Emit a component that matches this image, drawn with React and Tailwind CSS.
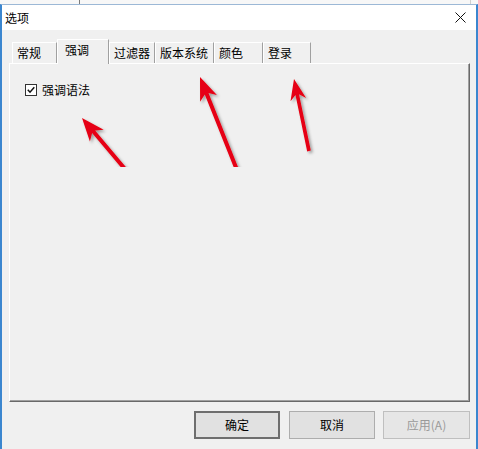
import React from 'react';

const FONT = "font-['Noto_Sans_CJK_SC','Microsoft_YaHei',sans-serif]";

// a red arrow drawn as a polygon, tip -> tail
const arrowPoints = (tx, ty, sx, sy, shaft = 2, headLen = 22, headHalf = 8) => {
  const dx = sx - tx;
  const dy = sy - ty;
  const len = Math.hypot(dx, dy);
  const ux = dx / len;
  const uy = dy / len;
  const px = -uy;
  const py = ux;
  const bx = tx + ux * headLen;
  const by = ty + uy * headLen;
  const nx = tx + ux * (headLen - 5);
  const ny = ty + uy * (headLen - 5);
  const pts = [
    [tx, ty],
    [bx + px * headHalf, by + py * headHalf],
    [nx + px * shaft, ny + py * shaft],
    [sx + px * shaft, sy + py * shaft],
    [sx - px * shaft, sy - py * shaft],
    [nx - px * shaft, ny - py * shaft],
    [bx - px * headHalf, by - py * headHalf],
  ];
  return pts.map(([x, y]) => `${x.toFixed(1)},${y.toFixed(1)}`).join(' ');
};

const Arrows = () => (
  <svg className="absolute inset-0 pointer-events-none" width="478" height="449" viewBox="0 0 478 449">
    <defs>
      <filter id="sh" x="-20%" y="-20%" width="140%" height="140%">
        <feDropShadow dx="2" dy="2" stdDeviation="1.5" floodColor="#000" floodOpacity="0.35" />
      </filter>
      <clipPath id="cut">
        <rect x="0" y="0" width="478" height="167" />
      </clipPath>
    </defs>
    <g clipPath="url(#cut)" filter="url(#sh)" fill="#e60012">
      <polygon points={arrowPoints(82, 118, 130, 175, 2, 23, 9)} />
      <polygon points={arrowPoints(200, 77, 239, 175, 2, 23, 9)} />
      <polygon points={arrowPoints(294, 79, 309, 151, 1.8, 21, 8)} />
    </g>
  </svg>
);

const Tab = ({ label, w, active }) =>
  active ? (
    <div
      className={`relative z-10 -mb-px h-[25px] ${w} bg-[#f0f0f0] border-l border-t border-white border-r border-r-[#a0a0a0] pl-[7px] pt-[2px] text-[12px] leading-[16px] text-black`}
    >
      {label}
    </div>
  ) : (
    <div
      className={`h-[21px] ${w} bg-[#f0f0f0] border-l border-t border-white border-r border-r-[#a0a0a0] pl-[4px] pt-[2px] text-[12px] leading-[16px] text-black`}
    >
      {label}
    </div>
  );

const Button = ({ label, w, primary, disabled }) => (
  <div
    className={`h-[28px] ${w} flex items-center justify-center text-[12px] ${
      primary
        ? 'border-2 border-[#6e6e6e] bg-[#e1e1e1] text-black'
        : disabled
        ? 'border border-[#bfbfbf] bg-[#e6e6e6] text-[#9a9a9a]'
        : 'border border-[#adadad] bg-[#e1e1e1] text-black'
    }`}
  >
    {label}
  </div>
);

export default function App() {
  return (
    <div className={`relative w-[478px] h-[449px] overflow-hidden bg-[#f0f0f0] ${FONT} flex flex-col`}>
      {/* window behind the dialog */}
      <div className="h-[4px] flex bg-[#f7f7f7]">
        <div className="w-[79px]" />
        <div className="w-px bg-[#7a7a7a]" />
        <div className="flex-1" />
        <div className="w-px bg-[#d0d0d0] mr-[7px]" />
      </div>

      <div className="flex-1 flex flex-col border-l-2 border-r-2 border-t border-[#3b86cf] border-t-[#9cb8d6]">
        {/* title bar */}
        <div className="h-[25px] bg-white flex items-center justify-between pl-[3px] pr-[10px]">
          <span className="text-[12px] text-black leading-none">选项</span>
          <svg width="11" height="11" viewBox="0 0 11 11">
            <path d="M0.5 0.5 L10.5 10.5 M10.5 0.5 L0.5 10.5" stroke="#111" strokeWidth="1" />
          </svg>
        </div>

        <div className="flex-1 bg-[#f0f0f0] flex flex-col">
          {/* tabs */}
          <div className="mt-[9px] ml-[10px] h-[24px] flex items-end">
            <Tab label="常规" w="w-[45px]" />
            <Tab label="强调" w="w-[52px]" active />
            <Tab label="过滤器" w="w-[46px]" />
            <Tab label="版本系统" w="w-[59px]" />
            <Tab label="颜色" w="w-[49px]" />
            <Tab label="登录" w="w-[48px]" />
          </div>

          {/* tab page */}
          <div className="ml-[7px] w-[461px] h-[339px] bg-[#f0f0f0] border-t border-l border-white border-r border-b border-r-[#696969] border-b-[#696969] shadow-[inset_-1px_-1px_0_#a0a0a0] pt-[18px] pl-[15px]">
            <div className="flex items-center gap-[5px]">
              <div className="w-[12px] h-[12px] border border-[#333] bg-white flex items-center justify-center">
                <svg width="8" height="8" viewBox="0 0 8 8">
                  <path d="M0.8 3.8 L3 6.2 L7.3 1.2" stroke="#111" strokeWidth="1.5" fill="none" />
                </svg>
              </div>
              <span className="text-[12px] leading-[16px] text-black">强调语法</span>
            </div>
          </div>

          {/* buttons */}
          <div className="mt-[9px] pr-[6px] flex justify-end">
            <Button label="确定" w="w-[86px]" primary />
            <div className="w-[9px]" />
            <Button label="取消" w="w-[86px]" />
            <div className="w-[8px]" />
            <Button label="应用(A)" w="w-[87px]" disabled />
          </div>
        </div>
      </div>

      <Arrows />
    </div>
  );
}
